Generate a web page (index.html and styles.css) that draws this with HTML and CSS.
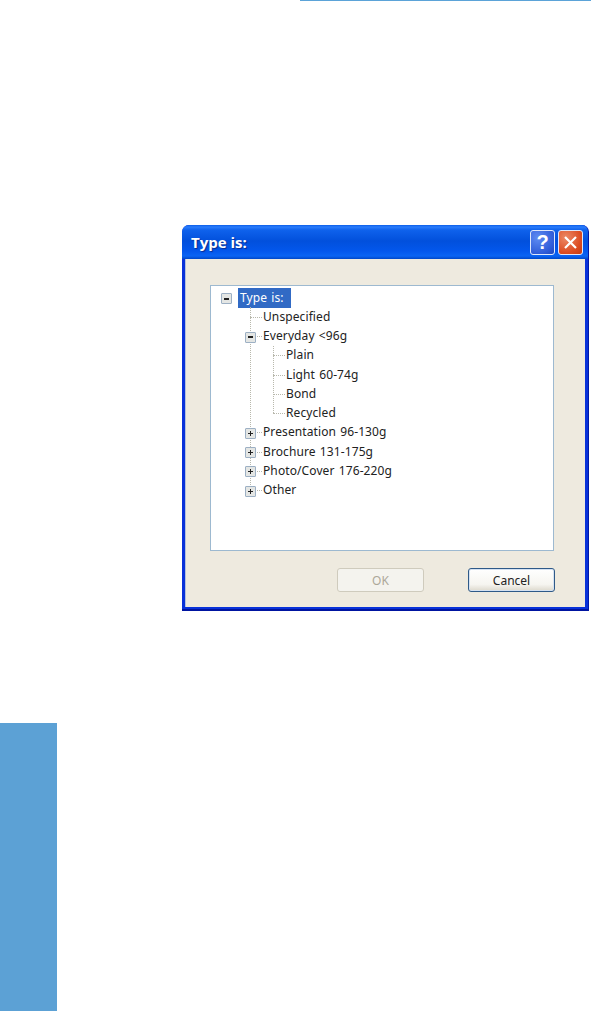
FILE: index.html
```html
<!DOCTYPE html>
<html lang="en">
  <head>
    <meta charset="UTF-8" />
    <title>Type is:</title>
    <link rel="stylesheet" href="styles.css">
  </head>
  <body>
    <div class="top-rule"></div>

    <!-- Dialog -->
    <div class="dialog">
      <div class="titlebar">
        <span class="title">Type is:</span>
        <div class="help-btn">?</div>
        <div class="close-btn">
          <svg width="15" height="15" viewBox="0 0 15 15">
            <path d="M2 2 L13 13 M13 2 L2 13" stroke="#fff" stroke-width="2.2" fill="none" />
          </svg>
        </div>
      </div>
      <div class="dialog-body">
        <div class="tree-box">
          <ul class="tree root">
            <li>
              <div class="row"><span class="exp minus"></span><span class="label selected">Type is:</span></div>
              <ul class="tree level2">
                <li><div class="row"><span class="dash"></span><span class="label">Unspecified</span></div></li>
                <li>
                  <div class="row"><span class="exp minus"></span><span class="label">Everyday &lt;96g</span></div>
                  <ul class="tree level3">
                    <li><div class="row"><span class="dash"></span><span class="label">Plain</span></div></li>
                    <li><div class="row"><span class="dash"></span><span class="label">Light 60-74g</span></div></li>
                    <li><div class="row"><span class="dash"></span><span class="label">Bond</span></div></li>
                    <li><div class="row"><span class="dash"></span><span class="label">Recycled</span></div></li>
                  </ul>
                </li>
                <li><div class="row"><span class="exp plus"></span><span class="label">Presentation 96-130g</span></div></li>
                <li><div class="row"><span class="exp plus"></span><span class="label">Brochure 131-175g</span></div></li>
                <li><div class="row"><span class="exp plus"></span><span class="label">Photo/Cover 176-220g</span></div></li>
                <li><div class="row"><span class="exp plus"></span><span class="label">Other</span></div></li>
              </ul>
            </li>
          </ul>
        </div>
        <div class="buttons">
          <button class="btn" disabled>OK</button>
          <button class="btn default">Cancel</button>
        </div>
      </div>
    </div>

    <div class="side-block"></div>
  </body>
</html>
```

FILE: styles.css
```css
body {
  margin: 0;
  background-color: #fff;
  font-family: "Noto Sans", sans-serif;
  font-size: 12px;
  color: #222;
}

/* Blue rule at the very top */
.top-rule {
  height: 1px;
  margin-left: 300px;
  width: 291px;
  background-color: #5ba3d8;
}

/* Blue block at bottom left */
.side-block {
  width: 57px;
  height: 288px;
  margin-top: 112px;
  background-color: #5ca1d5;
}

/* Dialog window */
.dialog {
  box-sizing: border-box;
  width: 407px;
  height: 386px;
  margin: 224px 0 0 182px;
  display: flex;
  flex-direction: column;
  border-radius: 7px 7px 0 0;
  border-right: 1px solid #0018a8;
  border-bottom: 2px solid #0014a0;
  overflow: hidden;
  background-color: #0831d9;
}

.titlebar {
  height: 34px;
  display: flex;
  align-items: center;
  padding: 0 5px 0 9px;
  gap: 3px;
  background: linear-gradient(to bottom, #0a5de8 0, #2a7cfc 2px, #0f62ec 5px, #0250dc 16px, #0357ec 26px, #0a64f4 31px, #0047c8 34px);
}

.title {
  flex: 1;
  color: #fff;
  font-family: "Open Sans", sans-serif;
  font-weight: 700;
  font-size: 15px;
  text-shadow: 1px 1px 1px #0b2c90;
}

.help-btn,
.close-btn {
  box-sizing: border-box;
  width: 25px;
  height: 25px;
  border: 1px solid #dfe8fb;
  border-radius: 3px;
  display: flex;
  align-items: center;
  justify-content: center;
}

.help-btn {
  background: radial-gradient(circle at 30% 30%, #5f8cf2, #2f5cd8 70%, #1f46bc);
  color: #fff;
  font-family: "Liberation Sans", sans-serif;
  font-size: 20px;
  font-weight: 700;
}

.close-btn {
  background: radial-gradient(circle at 30% 30%, #ec8a68, #dc4c22 65%, #c43a12);
}

.dialog-body {
  flex: 1;
  margin: 0 3px 2px 3px;
  padding: 26px 30px 0 24px;
  background-color: #eeeadf;
  border-left: 1px solid #b4c2dc;
}

/* Tree */
.tree-box {
  box-sizing: border-box;
  width: 344px;
  height: 266px;
  padding: 2px 0 0 10px;
  background-color: #fff;
  border: 1px solid #9db9d0;
}

.tree {
  list-style: none;
  margin: 0;
  padding: 0;
}

.tree li {
  position: relative;
}

.level2 {
  margin-left: 24px;
}

.level3 {
  margin-left: 23px;
}

/* vertical dotted guides */
.level2::before,
.level3::before {
  content: "";
  position: absolute;
  top: 19px;
  border-left: 1px dotted #b8b8ac;
}

.level2::before {
  left: 29px;
  height: 180px;
}

.level3::before {
  left: 28px;
  height: 67px;
}

.row {
  height: 19.25px;
  display: flex;
  align-items: center;
  white-space: nowrap;
}

.exp,
.dash {
  flex: none;
  width: 17px;
  height: 100%;
  position: relative;
}

/* horizontal dotted connector */
.level2 .exp::after,
.dash::after {
  content: "";
  position: absolute;
  left: 5px;
  right: 0;
  top: 50%;
  border-top: 1px dotted #b8b8ac;
}

.exp::before {
  content: "";
  position: absolute;
  z-index: 1;
  box-sizing: border-box;
  left: 0;
  top: 5px;
  width: 11px;
  height: 11px;
  border: 1px solid #9db0c4;
  border-radius: 1px;
  background-color: #e4e6e4;
  background-repeat: no-repeat;
  background-position: center;
}

.minus::before {
  background-image: linear-gradient(#222, #222);
  background-size: 5px 2px;
}

.plus::before {
  background-image: linear-gradient(#222, #222), linear-gradient(#222, #222);
  background-size: 5px 1px, 1px 5px;
}

.label {
  padding: 0 1px;
  line-height: 20px;
  letter-spacing: 0.1px;
  word-spacing: 1px;
}

.selected {
  padding: 0 7px 0 2px;
  background-color: #316ac5;
  color: #fff;
}

/* Buttons */
.buttons {
  display: flex;
  justify-content: flex-end;
  gap: 44px;
  margin-top: 17px;
}

.btn {
  box-sizing: border-box;
  width: 87px;
  height: 24px;
  padding: 0;
  font-family: "Noto Sans", sans-serif;
  font-size: 12px;
  border-radius: 3px;
  background: #f4f3ee;
  border: 1px solid #cfcbbd;
  color: #aca899;
}

.default {
  color: #222;
  border: 1px solid #2f5a88;
  background: linear-gradient(to bottom, #fff, #f6f5f0 70%, #dcd8cc);
  box-shadow: inset 0 0 0 1px #d5e2f2;
}
```
